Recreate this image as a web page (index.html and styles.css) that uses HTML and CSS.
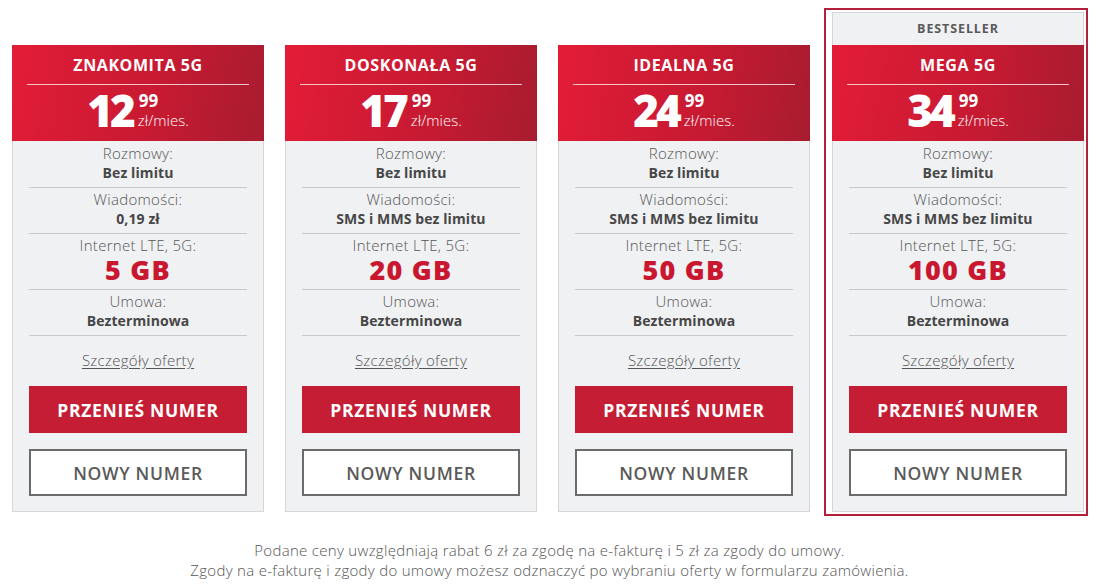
FILE: index.html
```html
<!DOCTYPE html>
<html lang="pl">
<head>
<meta charset="utf-8">
<title>Oferty 5G</title>
<link rel="stylesheet" href="styles.css">
</head>
<body>
<div class="offers">
  <div class="card">
    <div class="head">
      <div class="title">ZNAKOMITA 5G</div>
      <div class="price"><span class="big">12</span><span class="side"><span class="cents">99</span><span class="unit">zł/mies.</span></span></div>
    </div>
    <div class="body">
      <div class="row"><div class="label">Rozmowy:</div><div class="value">Bez limitu</div></div>
      <div class="row"><div class="label">Wiadomości:</div><div class="value">0,19 zł</div></div>
      <div class="row"><div class="label">Internet LTE, 5G:</div><div class="value data">5 GB</div></div>
      <div class="row"><div class="label">Umowa:</div><div class="value">Bezterminowa</div></div>
      <a class="details" href="#">Szczegóły oferty</a>
      <a class="btn btn-red" href="#">PRZENIEŚ NUMER</a>
      <a class="btn btn-white" href="#">NOWY NUMER</a>
    </div>
  </div>
  <div class="card">
    <div class="head">
      <div class="title">DOSKONAŁA 5G</div>
      <div class="price"><span class="big">17</span><span class="side"><span class="cents">99</span><span class="unit">zł/mies.</span></span></div>
    </div>
    <div class="body">
      <div class="row"><div class="label">Rozmowy:</div><div class="value">Bez limitu</div></div>
      <div class="row"><div class="label">Wiadomości:</div><div class="value">SMS i MMS bez limitu</div></div>
      <div class="row"><div class="label">Internet LTE, 5G:</div><div class="value data">20 GB</div></div>
      <div class="row"><div class="label">Umowa:</div><div class="value">Bezterminowa</div></div>
      <a class="details" href="#">Szczegóły oferty</a>
      <a class="btn btn-red" href="#">PRZENIEŚ NUMER</a>
      <a class="btn btn-white" href="#">NOWY NUMER</a>
    </div>
  </div>
  <div class="card">
    <div class="head">
      <div class="title">IDEALNA 5G</div>
      <div class="price"><span class="big">24</span><span class="side"><span class="cents">99</span><span class="unit">zł/mies.</span></span></div>
    </div>
    <div class="body">
      <div class="row"><div class="label">Rozmowy:</div><div class="value">Bez limitu</div></div>
      <div class="row"><div class="label">Wiadomości:</div><div class="value">SMS i MMS bez limitu</div></div>
      <div class="row"><div class="label">Internet LTE, 5G:</div><div class="value data">50 GB</div></div>
      <div class="row"><div class="label">Umowa:</div><div class="value">Bezterminowa</div></div>
      <a class="details" href="#">Szczegóły oferty</a>
      <a class="btn btn-red" href="#">PRZENIEŚ NUMER</a>
      <a class="btn btn-white" href="#">NOWY NUMER</a>
    </div>
  </div>
  <div class="featured">
    <div class="card card-best">
      <div class="badge">BESTSELLER</div>
      <div class="head">
        <div class="title">MEGA 5G</div>
        <div class="price"><span class="big">34</span><span class="side"><span class="cents">99</span><span class="unit">zł/mies.</span></span></div>
      </div>
      <div class="body">
        <div class="row"><div class="label">Rozmowy:</div><div class="value">Bez limitu</div></div>
        <div class="row"><div class="label">Wiadomości:</div><div class="value">SMS i MMS bez limitu</div></div>
        <div class="row"><div class="label">Internet LTE, 5G:</div><div class="value data">100 GB</div></div>
        <div class="row"><div class="label">Umowa:</div><div class="value">Bezterminowa</div></div>
        <a class="details" href="#">Szczegóły oferty</a>
        <a class="btn btn-red" href="#">PRZENIEŚ NUMER</a>
        <a class="btn btn-white" href="#">NOWY NUMER</a>
      </div>
    </div>
  </div>
</div>
<p class="note">Podane ceny uwzględniają rabat 6 zł za zgodę na e-fakturę i 5 zł za zgody do umowy.<br>Zgody na e-fakturę i zgody do umowy możesz odznaczyć po wybraniu oferty w formularzu zamówienia.</p>
</body>
</html>
```

FILE: styles.css
```css
* { box-sizing: border-box; }
html, body { background: #ffffff; }
body {
  margin: 8px;
  font-family: "Open Sans", "DejaVu Sans", sans-serif;
  color: #555555;
}
.offers {
  display: flex;
  align-items: flex-start;
  gap: 21px;
  padding-left: 4px;
}
.card {
  width: 252px;
  border: 1px solid #d6d6d8;
  background: #f0f1f3;
  margin-top: 37px;
}
.featured {
  margin-left: -7px;
  border: 2px solid #b3203a;
  padding: 2px 2px 2px 6px;
}
.card-best { margin-top: 0; }
.badge {
  height: 32px;
  line-height: 32px;
  text-align: center;
  font-size: 12.5px;
  font-weight: 700;
  color: #5a5a5a;
  letter-spacing: 0.9px;
}
.head {
  background: linear-gradient(100deg, #e31c37 0%, #c81a32 55%, #a81c30 100%);
  color: #ffffff;
  margin: -1px -1px 0;
  padding: 0 15px;
}
.card-best .head { margin-top: 0; }
.title {
  height: 40px;
  padding-top: 10px;
  line-height: 20px;
  text-align: center;
  font-size: 16px;
  font-weight: 700;
  letter-spacing: 0.6px;
  border-bottom: 1px solid rgba(255,255,255,0.75);
}
.price {
  height: 56px;
  display: flex;
  justify-content: center;
  align-items: flex-start;
  padding-top: 3px;
}
.big {
  font-size: 44px;
  line-height: 44px;
  font-weight: 800;
  letter-spacing: -3px;
}
.side {
  display: flex;
  flex-direction: column;
  margin-left: 6px;
  margin-top: 5px;
}
.cents {
  font-size: 17px;
  line-height: 16px;
  font-weight: 700;
}
.unit {
  font-size: 15px;
  line-height: 16px;
  font-weight: 300;
  margin-top: 3px;
  margin-left: -1px;
}
.body {
  padding: 1px 16px 15px;
  display: flex;
  flex-direction: column;
  align-items: stretch;
  text-align: center;
}
.row {
  padding: 1px 0 4px;
  border-bottom: 1px solid #c9c9cb;
}
.label {
  font-size: 15px;
  line-height: 20px;
  font-weight: 300;
  letter-spacing: 0.3px;
  color: #555555;
}
.value {
  font-size: 14px;
  line-height: 20px;
  font-weight: 700;
  letter-spacing: 0.1px;
  color: #474747;
}
.value.data {
  font-size: 27px;
  line-height: 30px;
  font-weight: 800;
  letter-spacing: 1.2px;
  color: #c8172f;
}
.details {
  margin-top: 14px;
  font-size: 15px;
  line-height: 20px;
  font-weight: 300;
  letter-spacing: 0.3px;
  color: #555555;
  text-decoration: underline;
  text-underline-offset: 2px;
}
.btn {
  display: flex;
  align-items: center;
  justify-content: center;
  height: 47px;
  font-size: 17.5px;
  font-weight: 700;
  letter-spacing: 0.7px;
  text-decoration: none;
}
.btn-red {
  margin-top: 16px;
  background: #c51d33;
  color: #ffffff;
}
.btn-white {
  margin-top: 16px;
  background: #ffffff;
  border: 2px solid #6b6b6b;
  color: #5a5a5a;
  font-weight: 600;
}
.note {
  margin: 24px 0 0;
  text-align: center;
  font-size: 15px;
  line-height: 20px;
  font-weight: 300;
  letter-spacing: 0.3px;
  color: #555555;
}
```
